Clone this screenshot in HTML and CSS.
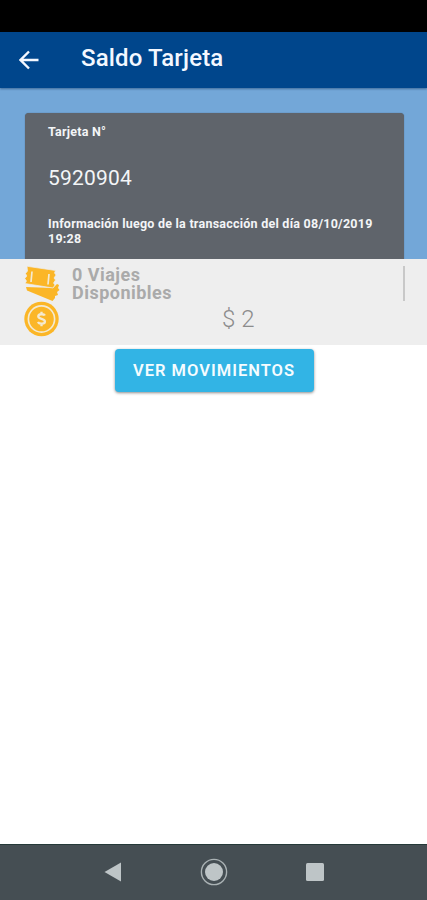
FILE: index.html
```html
<!DOCTYPE html>
<html lang="es">
<head>
<meta charset="utf-8">
<meta name="viewport" content="width=device-width, initial-scale=1">
<title>Saldo Tarjeta</title>
<link rel="stylesheet" href="styles.css">
</head>
<body>
<div class="screen">
  <div class="status-bar"></div>
  <header class="app-bar">
    <svg class="back" viewBox="0 0 20 20"><path d="M19.500 10H2M10 1.500L1.500 10L10 18.500"/></svg>
    <h1>Saldo Tarjeta</h1>
  </header>
  <section class="hero">
    <div class="card">
      <p class="label">Tarjeta N°</p>
      <p class="number">5920904</p>
      <p class="info">Información luego de la transacción del día 08/10/2019<br>19:28</p>
    </div>
  </section>
  <section class="summary">
    <div class="trips">
      <svg class="tickets" viewBox="0 0 36 36">
        <path class="gold" d="M2 21L29 22L31 20L33 18L35 19L34 22L35.500 24L33 26L34 29L31 30L31 32L28.500 35L3 24.500Z"/>
        <path class="gold edge" d="M3 .3L31.500 4.500L30.500 7L32 9L30 12L31.500 14L29.500 17L31 19L29 22L1 17.500L2.500 15L.8 12.500L2.800 10L1.500 7.500L3.500 5Z"/>
        <path class="cut" d="M8 5.500L7 16M25 8L24 18.500"/>
      </svg>
      <p class="trips-text">0 Viajes<br>Disponibles</p>
    </div>
    <div class="balance">
      <svg class="coin" viewBox="0 0 36 36">
        <circle class="gold" cx="18" cy="18" r="17.700"/>
        <circle class="ring" cx="18" cy="18" r="13.500"/>
        <path class="dollar" d="M21.500 14.500C20.500 12.500 14.700 12.600 14.700 15.400C14.700 18.500 21.500 17.200 21.500 20.600C21.500 23.500 15.500 23.600 14.300 21.100M18 10.500V13M18 23V25.500"/>
      </svg>
      <p class="amount">$ 2</p>
    </div>
  </section>
  <main class="content"><button class="action">VER MOVIMIENTOS</button></main>
  <nav class="nav-bar">
    <svg viewBox="0 0 28 28"><path d="M5.500 14L22 4.500V23.500Z"/></svg>
    <svg viewBox="0 0 28 28"><circle class="home-ring" cx="14" cy="14" r="12.600"/><circle cx="14" cy="14" r="9"/></svg>
    <svg viewBox="0 0 28 28"><rect x="5" y="5" width="18" height="18" rx="1.500"/></svg>
  </nav>
</div>
</body>
</html>
```
FILE: styles.css
```css
* { box-sizing: border-box; }
body, h1, p { margin: 0; }
body { font-family: Roboto, "Liberation Sans", sans-serif; background: #fff; }
.screen { width: 427px; height: 900px; display: flex; flex-direction: column; overflow: hidden; }
.status-bar { height: 32px; background: #000; }
.app-bar { height: 56px; background: #00468c; color: #f4f8ff; display: flex; align-items: flex-start; padding: 12px 0 0 19px; box-shadow: 0 1px 2px rgba(0, 35, 80, .45); position: relative; }
.back { width: 20px; height: 20px; margin-top: 6px; fill: none; stroke: #f4f8ff; stroke-width: 2.400; }
h1 { margin-left: 42px; font-size: 24px; line-height: 28px; font-weight: 500; letter-spacing: .15px; white-space: nowrap; }
.hero { height: 171px; background: #73a7d8; padding: 25px 23px 0 25px; }
.card { height: 146px; background: #5f646b; color: #f3f5f7; border-radius: 4px 4px 0 0; padding: 11px 23px 0; box-shadow: 0 0 1px #43566d; }
.label, .info { font-size: 12.500px; line-height: 15px; font-weight: 700; letter-spacing: .24px; white-space: nowrap; }
.number { margin-top: 25px; font-size: 21px; line-height: 28px; letter-spacing: .2px; }
.info { margin-top: 24px; }
.summary { height: 86px; background: #eee; color: #aaa; padding: 7px 22px 0 24px; }
.trips { height: 35px; display: flex; border-right: 2px solid #c8c8c8; }
.tickets { width: 36px; height: 36px; }
.trips-text { margin-left: 12px; font-size: 18px; line-height: 18px; font-weight: 700; letter-spacing: .48px; }
.balance { display: flex; }
.coin { width: 35px; height: 36px; }
.amount { margin-left: 163px; font-size: 24px; line-height: 36px; font-weight: 300; color: #8c8c8c; }
.gold { fill: #fbb627; }
.edge { stroke: #eee; stroke-width: .7; }
.cut, .ring, .dollar { fill: none; stroke: #f4ead1; stroke-width: 1.700; }
.dollar { stroke-width: 2.400; }
.content { flex: 1; padding-top: 4px; }
.action { display: block; width: 199px; height: 43px; margin-left: 114.500px; padding: 0; border: 0; border-radius: 4px; background: #32b4e5; color: #f5fcff; font: 600 16.500px/43px Roboto, sans-serif; letter-spacing: 1px; box-shadow: 0 1px 3px rgba(0, 0, 0, .45); }
.nav-bar { height: 56px; background: #454e53; border-top: 1px solid #253a39; display: flex; align-items: center; padding: 0 0 2px 99px; gap: 73px; }
.nav-bar svg { width: 28px; height: 28px; fill: #bec5c7; }
.nav-bar .home-ring { fill: none; stroke: #aab2b4; stroke-width: 1.400; }
```
